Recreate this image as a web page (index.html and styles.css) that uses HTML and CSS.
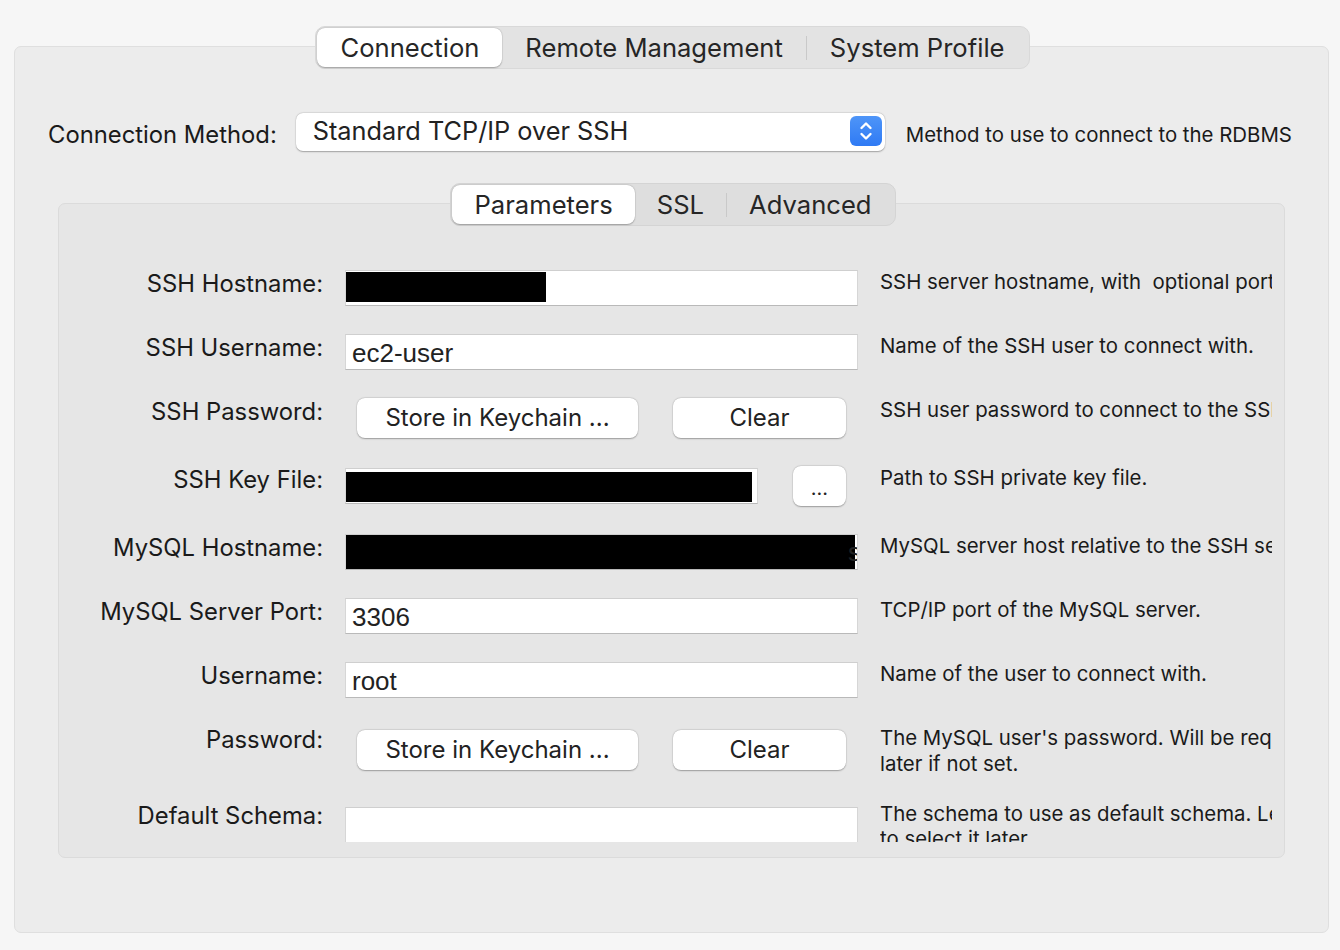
FILE: index.html
```html
<!DOCTYPE html>
<html lang="en">
<head>
<meta charset="utf-8">
<title>Connection</title>
<link rel="stylesheet" href="styles.css">
</head>
<body>
<div class="outer">
  <div class="seg seg-top">
    <div class="seg-item active">Connection</div>
    <div class="seg-item">Remote Management</div>
    <div class="seg-sep"></div>
    <div class="seg-item">System Profile</div>
  </div>

  <div class="method-row">
    <div class="method-label">Connection Method:</div>
    <div class="select">
      <span class="select-text">Standard TCP/IP over SSH</span>
      <span class="stepper">
        <svg width="32" height="28" viewBox="0 0 32 28">
          <path d="M11.5 11 L16 6.5 L20.5 11" fill="none" stroke="#fff" stroke-width="2.4" stroke-linecap="round" stroke-linejoin="round"/>
          <path d="M11.5 17 L16 21.5 L20.5 17" fill="none" stroke="#fff" stroke-width="2.4" stroke-linecap="round" stroke-linejoin="round"/>
        </svg>
      </span>
    </div>
    <div class="method-desc">Method to use to connect to the RDBMS</div>
  </div>

  <div class="inner">
    <div class="seg seg-inner">
      <div class="seg-item active">Parameters</div>
      <div class="seg-item">SSL</div>
      <div class="seg-sep"></div>
      <div class="seg-item">Advanced</div>
    </div>

    <div class="rows">
      <div class="label r1">SSH Hostname:</div>
      <div class="ctl r1"><div class="field"><span class="redact w-host"></span></div></div>
      <div class="desc r1"><span>SSH server hostname, with&nbsp; optional port</span></div>

      <div class="label r2">SSH Username:</div>
      <div class="ctl r2"><div class="field"><span class="val">ec2-user</span></div></div>
      <div class="desc r2"><span>Name of the SSH user to connect with.</span></div>

      <div class="label r3">SSH Password:</div>
      <div class="ctl r3 btns"><div class="btn btn-store">Store in Keychain ...</div><div class="btn btn-clear">Clear</div></div>
      <div class="desc r3"><span>SSH user password to connect to the SSH tunnel.</span></div>

      <div class="label r4">SSH Key File:</div>
      <div class="ctl r4 keyrow"><div class="field field-key"><span class="redact w-key"></span></div><div class="btn btn-dots">...</div></div>
      <div class="desc r4"><span>Path to SSH private key file.</span></div>

      <div class="label r5">MySQL Hostname:</div>
      <div class="ctl r5"><div class="field field-mysql"><span class="redact w-mysql"></span><span class="ghost">s</span></div></div>
      <div class="desc r5"><span>MySQL server host relative to the SSH server.</span></div>

      <div class="label r6">MySQL Server Port:</div>
      <div class="ctl r6"><div class="field"><span class="val">3306</span></div></div>
      <div class="desc r6"><span>TCP/IP port of the MySQL server.</span></div>

      <div class="label r7">Username:</div>
      <div class="ctl r7"><div class="field"><span class="val">root</span></div></div>
      <div class="desc r7"><span>Name of the user to connect with.</span></div>

      <div class="label r8">Password:</div>
      <div class="ctl r8 btns btns-low"><div class="btn btn-store">Store in Keychain ...</div><div class="btn btn-clear">Clear</div></div>
      <div class="desc r8"><span>The MySQL user's password. Will be requested<br>later if not set.</span></div>

      <div class="label r9">Default Schema:</div>
      <div class="ctl r9"><div class="field field-schema"></div></div>
      <div class="desc r9 desc-tight"><span>The schema to use as default schema. Leave blank<br>to select it later.</span></div>
    </div>
  </div>
</div>
</body>
</html>
```

FILE: styles.css
```css
* { box-sizing: border-box; }

html, body {
  margin: 0;
  padding: 0;
}

body {
  width: 1340px;
  height: 950px;
  background: #f6f6f6;
  font-family: "Inter", "Liberation Sans", sans-serif;
  color: #1d1d1d;
  overflow: hidden;
}

.outer {
  margin: 46px 0 0 14px;
  width: 1315px;
  height: 887px;
  border: 1px solid #dfdfdf;
  border-radius: 7px;
  background: #ececec;
  display: flex;
  flex-direction: column;
  align-items: center;
}

/* segmented controls */
.seg {
  display: flex;
  align-items: center;
  height: 43px;
  padding: 1px;
  border: 1px solid #d9d9d9;
  border-radius: 10px;
  background: #e3e3e3;
  font-size: 25.6px;
  color: #262626;
}

.seg-top {
  margin-top: -21px;
  margin-left: 2px;
}

.seg-item {
  height: 39px;
  line-height: 39px;
  padding: 0 23px;
  white-space: nowrap;
}

.seg-item.active {
  background: #fff;
  border-radius: 8px;
  box-shadow: 0 0.5px 1.5px rgba(0, 0, 0, 0.28), 0 0 0 0.5px rgba(0, 0, 0, 0.06);
}

.seg-sep {
  width: 1px;
  height: 24px;
  background: #c9c9c9;
}

/* connection method row */
.method-row {
  align-self: stretch;
  display: flex;
  align-items: center;
  margin-top: 44px;
  padding-left: 33px;
  height: 38px;
}

.method-label {
  font-size: 23.8px;
  color: #1a1a1a;
  margin-right: 19px;
  white-space: nowrap;
  position: relative;
  top: 2px;
}

.select {
  width: 589px;
  height: 38px;
  background: #fff;
  border-radius: 7px;
  box-shadow: 0 0.5px 1.5px rgba(0, 0, 0, 0.3), 0 0 0 0.5px rgba(0, 0, 0, 0.05);
  display: flex;
  align-items: center;
  justify-content: space-between;
  padding: 0 3px 0 17px;
}

.select-text {
  font-size: 25.3px;
  color: #222;
  position: relative;
  top: -2px;
}

.stepper {
  width: 32px;
  height: 30px;
  border-radius: 6px;
  background: linear-gradient(#4e95f8, #2f7af4);
  display: flex;
  align-items: center;
  justify-content: center;
  position: relative;
  top: -1px;
}

.method-desc {
  margin-left: 21px;
  font-size: 20.4px;
  color: #1a1a1a;
  white-space: nowrap;
  position: relative;
  top: 2px;
}

/* inner panel */
.inner {
  margin-top: 52px;
  width: 1227px;
  border: 1px solid #dbdbdb;
  border-radius: 7px;
  background: #e6e6e6;
  display: flex;
  flex-direction: column;
  align-items: center;
  padding-bottom: 15px;
}

.seg-inner {
  margin-top: -21px;
  margin-left: 3px;
  background: #dedede;
  border-color: #d4d4d4;
}

.seg-inner .seg-item {
  padding: 0 22px;
}

.rows {
  align-self: stretch;
  margin-top: 44px;
  height: 572px;
  overflow: hidden;
  display: grid;
  grid-template-columns: 264px 513px 392px;
  column-gap: 22px;
  grid-template-rows: 64px 64px 68px 68px 64px 64px 64px 76px 40px;
  align-items: start;
}

.r1 { grid-row: 1; }
.r2 { grid-row: 2; }
.r3 { grid-row: 3; }
.r4 { grid-row: 4; }
.r5 { grid-row: 5; }
.r6 { grid-row: 6; }
.r7 { grid-row: 7; }
.r8 { grid-row: 8; }
.r9 { grid-row: 9; }

.label {
  grid-column: 1;
  text-align: right;
  font-size: 23.8px;
  line-height: 28px;
  color: #1a1a1a;
  white-space: nowrap;
}

.ctl {
  grid-column: 2;
}

.desc {
  grid-column: 3;
  overflow: hidden;
  margin-top: -1px;
  font-size: 20.4px;
  line-height: 26px;
  color: #1a1a1a;
  white-space: nowrap;
}

.desc-tight { line-height: 25px; }

.field {
  position: relative;
  height: 36px;
  background: #fff;
  border: 1px solid #d6d6d6;
  border-bottom-color: #b9b9b9;
  border-top-color: #cfcfcf;
  overflow: hidden;
  display: flex;
  align-items: center;
  padding-left: 6px;
}

.val {
  font-family: "Liberation Sans", "Helvetica", sans-serif;
  font-size: 26px;
  color: #222;
  position: relative;
  top: 1px;
}

.redact {
  position: absolute;
  left: 0;
  top: 1px;
  height: 30px;
  background: #000;
}

.w-host { width: 200px; }
.w-key { width: 406px; top: 3px; }
.w-mysql { width: 509px; top: 0; height: 34px; }

.ghost {
  position: absolute;
  right: -4px;
  top: 2px;
  font-family: "Liberation Sans", sans-serif;
  font-size: 26px;
  color: #222;
}

.keyrow {
  display: flex;
  align-items: flex-start;
}

.field-key {
  width: 413px;
  margin-top: 2px;
}

.field-schema {
  margin-top: 5px;
  height: 40px;
}

.btns {
  display: flex;
  padding-left: 12px;
}

.btns-low { padding-top: 4px; }

.btn {
  height: 40px;
  line-height: 40px;
  background: #fff;
  border-radius: 8px;
  box-shadow: 0 0.5px 1.5px rgba(0, 0, 0, 0.3), 0 0 0 0.5px rgba(0, 0, 0, 0.06);
  text-align: center;
  font-size: 24px;
  color: #222;
  white-space: nowrap;
}

.btn-store { width: 281px; }
.btn-clear { width: 173px; margin-left: 35px; }
.btn-dots { width: 53px; margin-left: 35px; font-size: 20px; line-height: 44px; }
```
